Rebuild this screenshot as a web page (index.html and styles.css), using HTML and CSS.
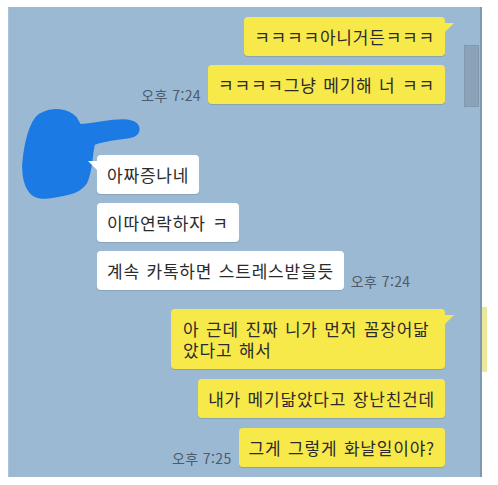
FILE: index.html
```html
<!DOCTYPE html>
<html lang="ko">
<head>
<meta charset="utf-8">
<title>카카오톡 대화</title>
<meta name="viewport" content="width=device-width,initial-scale=1">
<link rel="stylesheet" href="styles.css">
</head>
<body>
<div class="page">
  <!-- 채팅창 -->
  <section class="chat">
    <div class="thumb"></div>

    <div class="group mine">
      <div class="row"><p class="bubble yellow tail">ㅋㅋㅋㅋ아니거든ㅋㅋㅋ</p></div>
      <div class="row"><span class="time">오후 7:24</span><p class="bubble yellow">ㅋㅋㅋㅋ그냥 메기해 너 ㅋㅋ</p></div>
    </div>

    <div class="group them">
      <!-- 프로필/이름 가림 낙서 -->
      <svg class="scribble" width="126" height="96" viewBox="0 0 126 96">
        <path d="M25 7 C35 2 50 3 58 12 L62 19 C80 18 100 12 112 15 C123 17 124 29 112 31 C100 33 85 34 76 38 C73 50 74 65 68 77 C62 86 52 88 40 90 C28 92 18 94 12 86 C5 77 4 62 6 50 C8 35 12 20 18 12 C20 9 22 8 25 7 Z"/>
      </svg>
      <div class="row"><p class="bubble white tail">아짜증나네</p></div>
      <div class="row"><p class="bubble white">이따연락하자 ㅋ</p></div>
      <div class="row"><p class="bubble white">계속 카톡하면 스트레스받을듯</p><span class="time">오후 7:24</span></div>
    </div>

    <div class="group mine last">
      <div class="row"><p class="bubble yellow tail wrap">아 근데 진짜 니가 먼저 꼼장어닮았다고 해서</p></div>
      <div class="row"><p class="bubble yellow">내가 메기닮았다고 장난친건데</p></div>
      <div class="row"><span class="time">오후 7:25</span><p class="bubble yellow">그게 그렇게 화날일이야?</p></div>
    </div>
  </section>

  <!-- 옆 창 가장자리 -->
  <div class="edge"><div class="peek"></div></div>
</div>
</body>
</html>
```

FILE: styles.css
```css
/* ── 색상 ─────────────────────────────── */
:root{
  --c-bg:#9bb9d3;          /* 채팅 배경 */
  --c-yellow:#f8e94a;      /* 내 말풍선 */
  --c-white:#ffffff;       /* 상대 말풍선 */
  --c-text:#2b2b2b;
  --c-time:#4d5b6b;
  --c-scribble:#1b7ae4;
}

*,*::before,*::after{box-sizing:border-box}
body{margin:0;background:#fff;
     font-family:"Noto Sans CJK KR","Liberation Sans",sans-serif;color:var(--c-text)}

/* ── 레이아웃 ─────────────────────────── */
.page{display:flex;padding:7px 0 0 8px}

.chat{position:relative;width:474px;height:470px;overflow:hidden;
      display:flex;flex-direction:column;padding:10px 0 0;
      background:var(--c-bg);border-right:2px solid #8199ae;border-left:1px solid #a9c3d8}

.edge{width:16px}
.peek{margin:300px 0 0;width:5px;height:65px;background:#ece79e}

/* 스크롤바 */
.thumb{position:absolute;top:38px;right:1px;width:15px;height:62px;
       background:#8aa3b9;border:1px solid #8199ae}

/* ── 그룹 ─────────────────────────────── */
.group{display:flex;flex-direction:column;gap:9px}
.group.mine{padding-right:35px}
.group.mine .row{display:flex;justify-content:flex-end;align-items:flex-end}
.group.them{position:relative;margin-top:9px;padding:42px 0 0 88px}
.group.them .row{display:flex;align-items:flex-end}
.group.last{margin-top:19px;gap:10px}

.scribble{position:absolute;left:9px;top:-7px}
.scribble path{fill:var(--c-scribble);stroke:var(--c-scribble);stroke-width:2;stroke-linejoin:round}

/* ── 말풍선 ───────────────────────────── */
.bubble{position:relative;margin:0;padding:9px 10px;
        font-size:17px;line-height:21px;letter-spacing:.8px;word-spacing:1px;
        border-radius:4px;white-space:nowrap}
.bubble.yellow{background:var(--c-yellow);box-shadow:0 1px 0 rgba(90,100,60,.25)}
.bubble.white{background:var(--c-white);box-shadow:0 1px 0 rgba(60,80,100,.2)}
.bubble.wrap{white-space:normal;word-break:break-all;max-width:274px;padding:9px 12px}

.bubble.tail::after{content:"";position:absolute;top:6px;width:10px;height:10px}
.bubble.yellow.tail::after{right:-9px;background:var(--c-yellow);
        clip-path:polygon(0 0,100% 0,0 100%)}
.bubble.white.tail::after{left:-9px;background:var(--c-white);
        clip-path:polygon(0 0,100% 0,100% 100%)}

.time{font-size:14px;line-height:16px;letter-spacing:.4px;color:var(--c-time);
      margin:0 7px 1px;white-space:nowrap}
```
